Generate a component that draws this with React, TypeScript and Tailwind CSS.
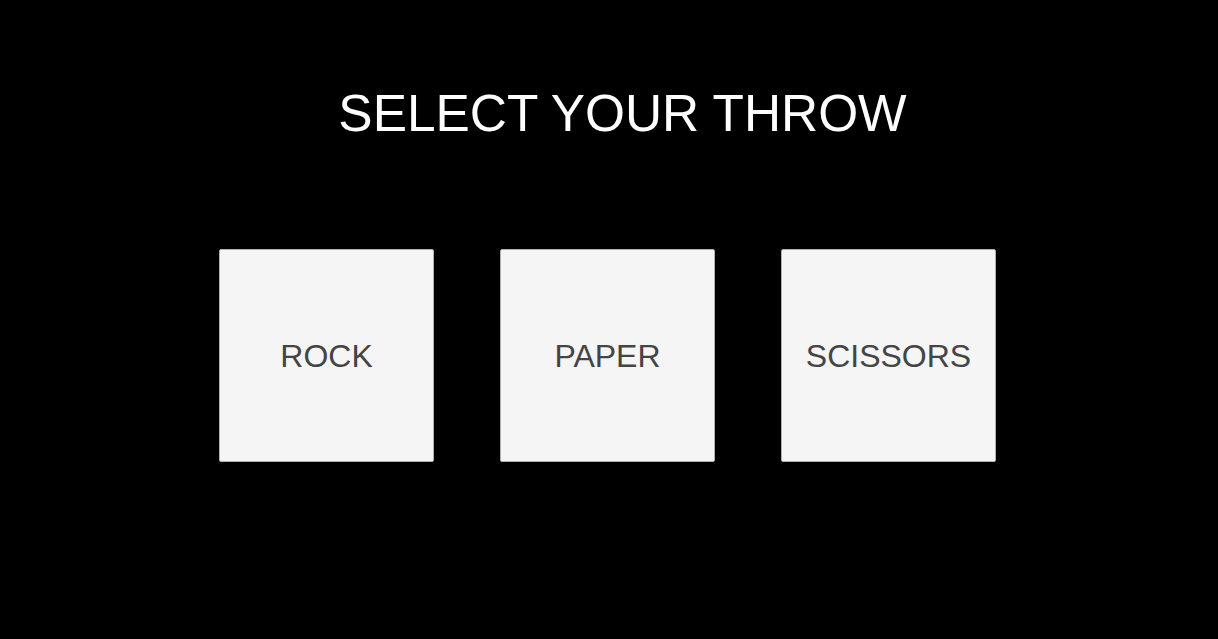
export default function App() {
  const throws = ["ROCK", "PAPER", "SCISSORS"];
  return (
    <div className="w-[1218px] h-[639px] bg-black flex flex-col items-center font-['Liberation_Sans',Arial,sans-serif] overflow-hidden">
      <h1 className="mt-[88px] pl-[27px] text-[51.4px] leading-none text-white">SELECT YOUR THROW</h1>
      <div className="mt-[110px] flex gap-[66px] pr-[3px]">
        {throws.map((t) => (
          <button
            key={t}
            className="w-[215px] h-[213px] bg-[#f5f5f5] border border-[#b0b0b0] rounded-[2px] flex items-center justify-center text-[32px] text-[#444444]"
          >
            {t}
          </button>
        ))}
      </div>
    </div>
  );
}
